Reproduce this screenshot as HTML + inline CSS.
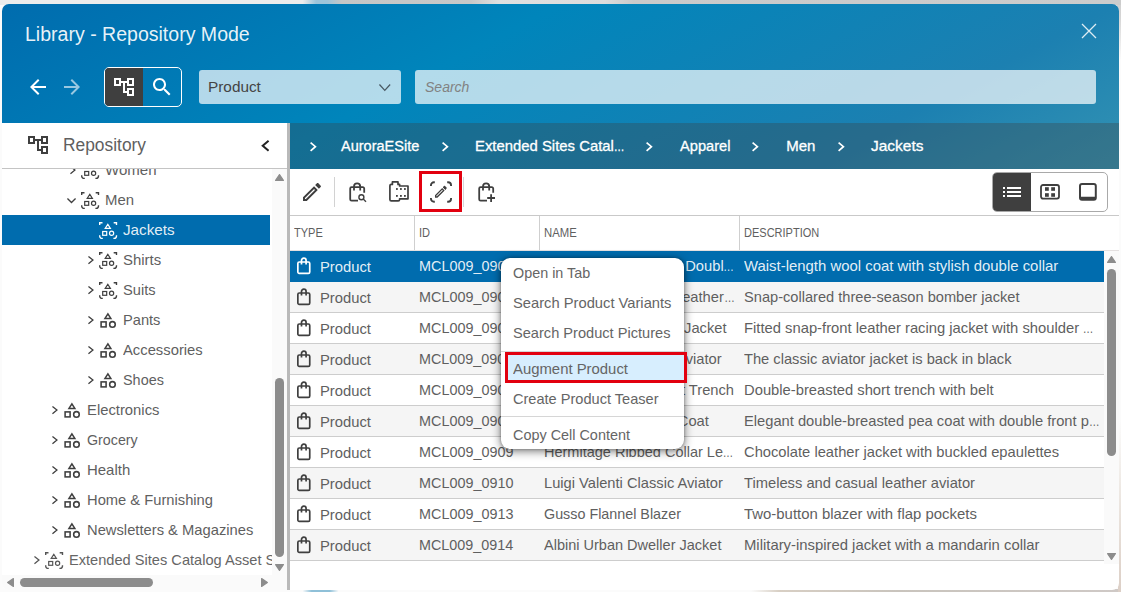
<!DOCTYPE html>
<html lang="en"><head><meta charset="utf-8"><title>Library - Repository Mode</title><style>
html,body{margin:0;padding:0}
body{width:1121px;height:592px;overflow:hidden;position:relative;font-family:'Liberation Sans',sans-serif;
 background:#fbfbfb}
#bt{position:absolute;left:0;top:0;width:1121px;height:5px;background:linear-gradient(90deg,#ececec 0%,#ececec 27%,#9cc4da 28.2%,#9cc4da 29.2%,#c6c6c6 30.5%,#c8c8c8 42%,#e0e0e0 44.5%,#dcdcdc 54%,#cacaca 56.5%,#cccccc 100%)}
#bb{position:absolute;left:0;top:589px;width:1121px;height:3px;background:linear-gradient(90deg,#fbfbfb 0%,#fbfbfb 27%,#8fc0d8 27.8%,#8fc0d8 29.4%,#fbfbfb 30.2%,#fbfbfb 67%,#d8cfc4 69.5%,#c9c4bd 80%,#cfc9c6 100%)}
#br0{position:absolute;left:1117px;top:0;width:4px;height:60px;background:linear-gradient(180deg,#cfcfcf 0%,#d6d6d6 30%,#fbfbfb 100%)}
#br{position:absolute;left:1118px;top:420px;width:3px;height:172px;background:linear-gradient(180deg,#fbfbfb 0%,#eee9e4 40%,#dccfc6 100%)}
#dlg{position:absolute;left:0;top:0;width:1121px;height:592px;clip-path:inset(4px 2px 2px 2px round 7px)}
.b{position:absolute;box-sizing:border-box}
.i{position:absolute;display:block;overflow:visible}
.e{display:inline-block;width:.72em;transform:scaleX(.72);transform-origin:0 50%}
.t{position:absolute;white-space:pre;line-height:30px;height:30px;font-family:'Liberation Sans',sans-serif;transform-origin:0 50%}
</style></head><body>
<div id="br0"></div><div id="bt"></div><div id="bb"></div><div id="br"></div>
<div id="dlg">
<div class="b hdr" style="left:0px;top:0px;width:1121px;height:169px;background:linear-gradient(to bottom right,#006cae 0%,#0085bb 25%,#1c80b1 50%,#6fc3b8 100%) 2px 4px/1117px 586px no-repeat"></div>
<span class="t " style="left:24.59px;top:19px;font-size:20px;color:rgba(255,255,255,.92);transform:scaleX(0.9767);">Library - Repository Mode</span>
<svg class="i" style="left:1080px;top:22px" width="18" height="18" viewBox="0 0 18 18" ><path d="M2 2L16 16M16 2L2 16" stroke="#fff" stroke-opacity="0.85" stroke-width="1.3" fill="none"/></svg>
<svg class="i" style="left:26px;top:75px;opacity:1" width="24" height="24" viewBox="0 0 24 24"><path fill="#fff" d="M20 11H7.83l5.59-5.59L12 4l-8 8 8 8 1.41-1.41L7.83 13H20v-2z"/></svg>
<svg class="i" style="left:60px;top:75px;opacity:0.6" width="24" height="24" viewBox="0 0 24 24"><path fill="#fff" d="M12 4l-1.41 1.41L16.17 11H4v2h12.17l-5.58 5.59L12 20l8-8z"/></svg>
<div class="b " style="left:104px;top:67px;width:78px;height:40px;border:1px solid #fff;border-radius:5px;box-sizing:border-box;overflow:hidden"><div class="b" style="left:0;top:0;width:38px;height:38px;background:#3f3f3f"></div></div>
<svg class="i" style="left:114px;top:78px" width="20" height="18" viewBox="0 0 20 18" ><g fill="none" stroke="#fff" stroke-width="2"><rect x="1" y="1" width="5" height="6"/><rect x="14" y="1" width="5" height="6"/><rect x="14" y="11" width="5" height="6"/><path d="M7 4H13M10 4V14H13"/></g></svg>
<svg class="i" style="left:150px;top:75px;opacity:1" width="24" height="24" viewBox="0 0 24 24"><path fill="#fff" d="M15.5 14h-.79l-.28-.27C15.41 12.59 16 11.11 16 9.5 16 5.91 13.09 3 9.5 3S3 5.91 3 9.5 5.91 16 9.5 16c1.61 0 3.09-.59 4.23-1.57l.27.28v.79l5 4.99L20.49 19l-4.99-5zm-6 0C7.01 14 5 11.99 5 9.5S7.01 5 9.5 5 14 7.01 14 9.5 11.99 14 9.5 14z"/></svg>
<div class="b " style="left:199px;top:70px;width:202px;height:34px;background:rgba(255,255,255,.7);border-radius:3px"></div>
<span class="t " style="left:208.42px;top:72px;font-size:15px;color:#444;transform:scaleX(1.0229);">Product</span>
<svg class="i" style="left:377.2px;top:82.3px" width="15.6" height="10.8" viewBox="0 0 15.6 10.8" ><path d="M2.455 2.4550000000000005L7.8 8.345L13.145 2.4550000000000005" fill="none" stroke="#4a5a64" stroke-width="1.3"/></svg>
<div class="b " style="left:415px;top:70px;width:681px;height:34px;background:rgba(255,255,255,.7);border-radius:3px"></div>
<span class="t " style="left:424.83px;top:72px;font-size:15px;color:#828282;transform:scaleX(0.9341);font-style:italic;">Search</span>
<div class="b " style="left:0px;top:123px;width:287px;height:469px;background:#fff"></div>
<svg class="i" style="left:28px;top:136px" width="20" height="18" viewBox="0 0 20 18" ><g fill="none" stroke="#3f3f3f" stroke-width="2"><rect x="1" y="1" width="5" height="6"/><rect x="14" y="1" width="5" height="6"/><rect x="14" y="11" width="5" height="6"/><path d="M7 4H13M10 4V14H13"/></g></svg>
<span class="t " style="left:63.30px;top:130px;font-size:18px;color:#5f5f5f;transform:scaleX(0.9651);">Repository</span>
<svg class="i" style="left:259.55px;top:138.45px" width="11.3" height="15.5" viewBox="0 0 11.3 15.5" ><path d="M8.600000000000001 2.7L2.7 7.75L8.600000000000001 12.8" fill="none" stroke="#222" stroke-width="2"/></svg>
<div class="b " style="left:0px;top:168px;width:287px;height:1px;background:#c4c4c4"></div>
<div class="b" style="left:0;top:169px;width:272px;height:406px;overflow:hidden"><div class="b" style="left:0;top:-169px;width:600px;height:592px"><svg class="i" style="left:68.3px;top:163.9px" width="9.4" height="12.2" viewBox="0 0 9.4 12.2" ><path d="M2.455 2.455L6.945 6.1L2.455 9.745" fill="none" stroke="#3f3f3f" stroke-width="1.3"/></svg><svg class="i" style="left:80.9px;top:162px" width="18.2" height="17.2" viewBox="0 0 18.2 17.2" ><g fill="none" stroke="#3f3f3f" stroke-width="1.4"><path d="M0.7 3.1V0.7H3.5M14.7 0.7H17.5V3.1"/><path d="M0.7 13.2V14a2.4 2.4 0 0 0 2.4 2.4H3.8M14.4 16.4H15.1a2.4 2.4 0 0 0 2.4-2.4V13.2"/></g><g fill="none" stroke="#3f3f3f" stroke-width="1.2"><path d="M8.8 2.3L11.4 6.4H6.2Z"/><rect x="3.7" y="9.5" width="4" height="3.8"/><circle cx="12.6" cy="11.3" r="2.1"/></g></svg><span class="t " style="left:104.70px;top:155px;font-size:15px;color:#5f5f5f;transform:scaleX(1.0020);">Women</span><svg class="i" style="left:65.0px;top:195.5px" width="13" height="9" viewBox="0 0 13 9" ><path d="M2.455 2.455L6.5 6.545L10.545 2.455" fill="none" stroke="#3f3f3f" stroke-width="1.3"/></svg><svg class="i" style="left:80.9px;top:192px" width="18.2" height="17.2" viewBox="0 0 18.2 17.2" ><g fill="none" stroke="#3f3f3f" stroke-width="1.4"><path d="M0.7 3.1V0.7H3.5M14.7 0.7H17.5V3.1"/><path d="M0.7 13.2V14a2.4 2.4 0 0 0 2.4 2.4H3.8M14.4 16.4H15.1a2.4 2.4 0 0 0 2.4-2.4V13.2"/></g><g fill="none" stroke="#3f3f3f" stroke-width="1.2"><path d="M8.8 2.3L11.4 6.4H6.2Z"/><rect x="3.7" y="9.5" width="4" height="3.8"/><circle cx="12.6" cy="11.3" r="2.1"/></g></svg><span class="t " style="left:104.70px;top:185px;font-size:15px;color:#5f5f5f;transform:scaleX(0.9947);">Men</span><div class="b" style="left:0;top:215px;width:270px;height:30px;background:#006cae"></div><svg class="i" style="left:98.9px;top:222px" width="18.2" height="17.2" viewBox="0 0 18.2 17.2" ><g fill="none" stroke="#fff" stroke-width="1.4"><path d="M0.7 3.1V0.7H3.5M14.7 0.7H17.5V3.1"/><path d="M0.7 13.2V14a2.4 2.4 0 0 0 2.4 2.4H3.8M14.4 16.4H15.1a2.4 2.4 0 0 0 2.4-2.4V13.2"/></g><g fill="none" stroke="#fff" stroke-width="1.2"><path d="M8.8 2.3L11.4 6.4H6.2Z"/><rect x="3.7" y="9.5" width="4" height="3.8"/><circle cx="12.6" cy="11.3" r="2.1"/></g></svg><span class="t " style="left:122.70px;top:215px;font-size:15px;color:rgba(255,255,255,.9);transform:scaleX(1.0149);">Jackets</span><svg class="i" style="left:86.3px;top:253.9px" width="9.4" height="12.2" viewBox="0 0 9.4 12.2" ><path d="M2.455 2.455L6.945 6.1L2.455 9.745" fill="none" stroke="#3f3f3f" stroke-width="1.3"/></svg><svg class="i" style="left:98.9px;top:252px" width="18.2" height="17.2" viewBox="0 0 18.2 17.2" ><g fill="none" stroke="#3f3f3f" stroke-width="1.4"><path d="M0.7 3.1V0.7H3.5M14.7 0.7H17.5V3.1"/><path d="M0.7 13.2V14a2.4 2.4 0 0 0 2.4 2.4H3.8M14.4 16.4H15.1a2.4 2.4 0 0 0 2.4-2.4V13.2"/></g><g fill="none" stroke="#3f3f3f" stroke-width="1.2"><path d="M8.8 2.3L11.4 6.4H6.2Z"/><rect x="3.7" y="9.5" width="4" height="3.8"/><circle cx="12.6" cy="11.3" r="2.1"/></g></svg><span class="t " style="left:122.70px;top:245px;font-size:15px;color:#5f5f5f;transform:scaleX(0.9960);">Shirts</span><svg class="i" style="left:86.3px;top:283.9px" width="9.4" height="12.2" viewBox="0 0 9.4 12.2" ><path d="M2.455 2.455L6.945 6.1L2.455 9.745" fill="none" stroke="#3f3f3f" stroke-width="1.3"/></svg><svg class="i" style="left:98.9px;top:282px" width="18.2" height="17.2" viewBox="0 0 18.2 17.2" ><g fill="none" stroke="#3f3f3f" stroke-width="1.4"><path d="M0.7 3.1V0.7H3.5M14.7 0.7H17.5V3.1"/><path d="M0.7 13.2V14a2.4 2.4 0 0 0 2.4 2.4H3.8M14.4 16.4H15.1a2.4 2.4 0 0 0 2.4-2.4V13.2"/></g><g fill="none" stroke="#3f3f3f" stroke-width="1.2"><path d="M8.8 2.3L11.4 6.4H6.2Z"/><rect x="3.7" y="9.5" width="4" height="3.8"/><circle cx="12.6" cy="11.3" r="2.1"/></g></svg><span class="t " style="left:122.70px;top:275px;font-size:15px;color:#5f5f5f;transform:scaleX(0.9771);">Suits</span><svg class="i" style="left:86.3px;top:313.9px" width="9.4" height="12.2" viewBox="0 0 9.4 12.2" ><path d="M2.455 2.455L6.945 6.1L2.455 9.745" fill="none" stroke="#3f3f3f" stroke-width="1.3"/></svg><svg class="i" style="left:100.4px;top:312.4px" width="16" height="16" viewBox="0 0 16 16" ><g fill="none" stroke="#3f3f3f" stroke-width="1.55" stroke-linejoin="miter"><path d="M7.9 1.9L10.8 6.4H5Z"/><rect x="1.1" y="9.9" width="5" height="5"/><circle cx="12.45" cy="12.4" r="2.8"/></g></svg><span class="t " style="left:122.70px;top:305px;font-size:15px;color:#5f5f5f;transform:scaleX(0.9762);">Pants</span><svg class="i" style="left:86.3px;top:343.9px" width="9.4" height="12.2" viewBox="0 0 9.4 12.2" ><path d="M2.455 2.455L6.945 6.1L2.455 9.745" fill="none" stroke="#3f3f3f" stroke-width="1.3"/></svg><svg class="i" style="left:100.4px;top:342.4px" width="16" height="16" viewBox="0 0 16 16" ><g fill="none" stroke="#3f3f3f" stroke-width="1.55" stroke-linejoin="miter"><path d="M7.9 1.9L10.8 6.4H5Z"/><rect x="1.1" y="9.9" width="5" height="5"/><circle cx="12.45" cy="12.4" r="2.8"/></g></svg><span class="t " style="left:122.70px;top:335px;font-size:15px;color:#5f5f5f;transform:scaleX(0.9857);">Accessories</span><svg class="i" style="left:86.3px;top:373.9px" width="9.4" height="12.2" viewBox="0 0 9.4 12.2" ><path d="M2.455 2.455L6.945 6.1L2.455 9.745" fill="none" stroke="#3f3f3f" stroke-width="1.3"/></svg><svg class="i" style="left:100.4px;top:372.4px" width="16" height="16" viewBox="0 0 16 16" ><g fill="none" stroke="#3f3f3f" stroke-width="1.55" stroke-linejoin="miter"><path d="M7.9 1.9L10.8 6.4H5Z"/><rect x="1.1" y="9.9" width="5" height="5"/><circle cx="12.45" cy="12.4" r="2.8"/></g></svg><span class="t " style="left:122.70px;top:365px;font-size:15px;color:#5f5f5f;transform:scaleX(0.9607);">Shoes</span><svg class="i" style="left:50.3px;top:403.9px" width="9.4" height="12.2" viewBox="0 0 9.4 12.2" ><path d="M2.455 2.455L6.945 6.1L2.455 9.745" fill="none" stroke="#3f3f3f" stroke-width="1.3"/></svg><svg class="i" style="left:64.4px;top:402.4px" width="16" height="16" viewBox="0 0 16 16" ><g fill="none" stroke="#3f3f3f" stroke-width="1.55" stroke-linejoin="miter"><path d="M7.9 1.9L10.8 6.4H5Z"/><rect x="1.1" y="9.9" width="5" height="5"/><circle cx="12.45" cy="12.4" r="2.8"/></g></svg><span class="t " style="left:86.70px;top:395px;font-size:15px;color:#5f5f5f;transform:scaleX(0.9876);">Electronics</span><svg class="i" style="left:50.3px;top:433.9px" width="9.4" height="12.2" viewBox="0 0 9.4 12.2" ><path d="M2.455 2.455L6.945 6.1L2.455 9.745" fill="none" stroke="#3f3f3f" stroke-width="1.3"/></svg><svg class="i" style="left:64.4px;top:432.4px" width="16" height="16" viewBox="0 0 16 16" ><g fill="none" stroke="#3f3f3f" stroke-width="1.55" stroke-linejoin="miter"><path d="M7.9 1.9L10.8 6.4H5Z"/><rect x="1.1" y="9.9" width="5" height="5"/><circle cx="12.45" cy="12.4" r="2.8"/></g></svg><span class="t " style="left:86.70px;top:425px;font-size:15px;color:#5f5f5f;transform:scaleX(0.9502);">Grocery</span><svg class="i" style="left:50.3px;top:463.9px" width="9.4" height="12.2" viewBox="0 0 9.4 12.2" ><path d="M2.455 2.455L6.945 6.1L2.455 9.745" fill="none" stroke="#3f3f3f" stroke-width="1.3"/></svg><svg class="i" style="left:64.4px;top:462.4px" width="16" height="16" viewBox="0 0 16 16" ><g fill="none" stroke="#3f3f3f" stroke-width="1.55" stroke-linejoin="miter"><path d="M7.9 1.9L10.8 6.4H5Z"/><rect x="1.1" y="9.9" width="5" height="5"/><circle cx="12.45" cy="12.4" r="2.8"/></g></svg><span class="t " style="left:86.70px;top:455px;font-size:15px;color:#5f5f5f;transform:scaleX(0.9964);">Health</span><svg class="i" style="left:50.3px;top:493.9px" width="9.4" height="12.2" viewBox="0 0 9.4 12.2" ><path d="M2.455 2.455L6.945 6.1L2.455 9.745" fill="none" stroke="#3f3f3f" stroke-width="1.3"/></svg><svg class="i" style="left:64.4px;top:492.4px" width="16" height="16" viewBox="0 0 16 16" ><g fill="none" stroke="#3f3f3f" stroke-width="1.55" stroke-linejoin="miter"><path d="M7.9 1.9L10.8 6.4H5Z"/><rect x="1.1" y="9.9" width="5" height="5"/><circle cx="12.45" cy="12.4" r="2.8"/></g></svg><span class="t " style="left:86.70px;top:485px;font-size:15px;color:#5f5f5f;transform:scaleX(0.9812);">Home &amp; Furnishing</span><svg class="i" style="left:50.3px;top:523.9px" width="9.4" height="12.2" viewBox="0 0 9.4 12.2" ><path d="M2.455 2.455L6.945 6.1L2.455 9.745" fill="none" stroke="#3f3f3f" stroke-width="1.3"/></svg><svg class="i" style="left:64.4px;top:522.4px" width="16" height="16" viewBox="0 0 16 16" ><g fill="none" stroke="#3f3f3f" stroke-width="1.55" stroke-linejoin="miter"><path d="M7.9 1.9L10.8 6.4H5Z"/><rect x="1.1" y="9.9" width="5" height="5"/><circle cx="12.45" cy="12.4" r="2.8"/></g></svg><span class="t " style="left:86.70px;top:515px;font-size:15px;color:#5f5f5f;transform:scaleX(0.9828);">Newsletters &amp; Magazines</span><svg class="i" style="left:32.3px;top:553.9px" width="9.4" height="12.2" viewBox="0 0 9.4 12.2" ><path d="M2.455 2.455L6.945 6.1L2.455 9.745" fill="none" stroke="#555" stroke-width="1.3"/></svg><svg class="i" style="left:44.9px;top:552px" width="18.2" height="17.2" viewBox="0 0 18.2 17.2" ><g fill="none" stroke="#555" stroke-width="1.4"><path d="M0.7 3.1V0.7H3.5M14.7 0.7H17.5V3.1"/><path d="M0.7 13.2V14a2.4 2.4 0 0 0 2.4 2.4H3.8M14.4 16.4H15.1a2.4 2.4 0 0 0 2.4-2.4V13.2"/></g><g fill="none" stroke="#555" stroke-width="1.2"><path d="M8.8 2.3L11.4 6.4H6.2Z"/><rect x="3.7" y="9.5" width="4" height="3.8"/><circle cx="12.6" cy="11.3" r="2.1"/></g></svg><span class="t " style="left:68.70px;top:545px;font-size:15px;color:#666;transform:scaleX(0.9740);">Extended Sites Catalog Asset Store</span></div></div>
<div class="b " style="left:272px;top:169px;width:15px;height:406px;background:#fafafa"></div>
<svg class="i" style="left:275px;top:174px" width="9" height="7" viewBox="0 0 9 7" ><path d="M0.6 6.4L4.5 0.6L8.4 6.4Z" fill="#8c8c8c" stroke="#8c8c8c" stroke-width="1.2" stroke-linejoin="round"/></svg>
<div class="b " style="left:275px;top:378px;width:9px;height:179px;background:#8c8c8c;border-radius:4.5px"></div>
<svg class="i" style="left:275px;top:564px" width="9" height="7" viewBox="0 0 9 7" ><path d="M0.6 0.6L4.5 6.4L8.4 0.6Z" fill="#8c8c8c" stroke="#8c8c8c" stroke-width="1.2" stroke-linejoin="round"/></svg>
<div class="b " style="left:2px;top:575px;width:285px;height:15px;background:#fafafa"></div>
<svg class="i" style="left:6.5px;top:578px" width="7" height="9" viewBox="0 0 7 9" ><path d="M6.4 0.6L0.6 4.5L6.4 8.4Z" fill="#8c8c8c" stroke="#8c8c8c" stroke-width="1.2" stroke-linejoin="round"/></svg>
<div class="b " style="left:20px;top:578px;width:133px;height:9px;background:#8c8c8c;border-radius:4.5px"></div>
<svg class="i" style="left:260.5px;top:578px" width="7" height="9" viewBox="0 0 7 9" ><path d="M0.6 0.6L6.4 4.5L0.6 8.4Z" fill="#8c8c8c" stroke="#8c8c8c" stroke-width="1.2" stroke-linejoin="round"/></svg>
<div class="b " style="left:287px;top:123px;width:3px;height:469px;background:#b9b9b9"></div>
<div class="b " style="left:290px;top:169px;width:831px;height:423px;background:#fff"></div>
<div class="b " style="left:290px;top:123px;width:831px;height:46px;background:rgba(63,63,63,.32)"></div>
<svg class="i" style="left:308.2px;top:139.5px" width="10" height="13.4" viewBox="0 0 10 13.4" ><path d="M2.5949999999999998 2.5949999999999998L7.405 6.7L2.5949999999999998 10.805" fill="none" stroke="#fff" stroke-width="1.7"/></svg>
<span class="t " style="left:341.40px;top:131px;font-size:15px;color:#fff;transform:scaleX(0.9682);-webkit-text-stroke:0.3px #fff;">AuroraESite</span>
<svg class="i" style="left:440.2px;top:139.5px" width="10" height="13.4" viewBox="0 0 10 13.4" ><path d="M2.5949999999999998 2.5949999999999998L7.405 6.7L2.5949999999999998 10.805" fill="none" stroke="#fff" stroke-width="1.7"/></svg>
<span class="t " style="left:475.16px;top:131px;font-size:15px;color:#fff;transform:scaleX(0.9912);-webkit-text-stroke:0.3px #fff;">Extended Sites Catal<span class="e">…</span></span>
<svg class="i" style="left:644.2px;top:139.5px" width="10" height="13.4" viewBox="0 0 10 13.4" ><path d="M2.5949999999999998 2.5949999999999998L7.405 6.7L2.5949999999999998 10.805" fill="none" stroke="#fff" stroke-width="1.7"/></svg>
<span class="t " style="left:679.50px;top:131px;font-size:15px;color:#fff;transform:scaleX(0.9754);-webkit-text-stroke:0.3px #fff;">Apparel</span>
<svg class="i" style="left:750.4px;top:139.5px" width="10" height="13.4" viewBox="0 0 10 13.4" ><path d="M2.5949999999999998 2.5949999999999998L7.405 6.7L2.5949999999999998 10.805" fill="none" stroke="#fff" stroke-width="1.7"/></svg>
<span class="t " style="left:786.25px;top:131px;font-size:15px;color:#fff;transform:scaleX(1.0000);-webkit-text-stroke:0.3px #fff;">Men</span>
<svg class="i" style="left:835.5px;top:139.5px" width="10" height="13.4" viewBox="0 0 10 13.4" ><path d="M2.5949999999999998 2.5949999999999998L7.405 6.7L2.5949999999999998 10.805" fill="none" stroke="#fff" stroke-width="1.7"/></svg>
<span class="t " style="left:870.94px;top:131px;font-size:15px;color:#fff;transform:scaleX(1.0320);-webkit-text-stroke:0.3px #fff;">Jackets</span>
<svg class="i" style="left:300px;top:180px;opacity:1" width="24" height="24" viewBox="0 0 24 24"><path fill="#3f3f3f" d="M14.06 9.02l.92.92L5.92 19H5v-.92l9.06-9.06M17.66 3c-.25 0-.51.1-.7.29l-1.83 1.83 3.75 3.75 1.83-1.83c.39-.39.39-1.02 0-1.41l-2.34-2.34c-.2-.2-.45-.29-.71-.29zm-3.6 3.19L3 17.25V21h3.75L17.81 9.94l-3.75-3.75z"/></svg>
<div class="b " style="left:334px;top:177px;width:1px;height:30px;background:#d2d2d2"></div>
<svg class="i" style="left:349px;top:182px" width="18" height="21" viewBox="0 0 18 21" ><g fill="none" stroke="#3f3f3f" stroke-width="1.8" stroke-linecap="butt"><path d="M15.2 10.7V6.6a1.4 1.4 0 0 0 -1.4 -1.4H2.6a1.4 1.4 0 0 0 -1.4 1.4V17.3a1.4 1.4 0 0 0 1.4 1.4H9"/><path d="M5 8.6V4.4a3.1 3.1 0 0 1 6.2 0V8.6"/></g><g fill="none" stroke="#3f3f3f" stroke-width="1.4"><circle cx="12.4" cy="15.3" r="2.5"/><path d="M14.2 17.1L17 19.7"/></g></svg>
<svg class="i" style="left:389px;top:181.4px" width="20" height="21" viewBox="0 0 20 21" ><g fill="none" stroke="#3f3f3f" stroke-width="1.7" stroke-linejoin="round"><path d="M10.6 5V3.4H9V0.9H3.4V3.4H2.3a1.4 1.4 0 0 0 -1.4 1.4V18.4a1.4 1.4 0 0 0 1.4 1.4H9.2a1.4 1.4 0 0 0 1.4 -1.4V17.8H19V5Z"/></g><g fill="#3f3f3f"><rect x="7" y="7.1" width="1.8" height="1.8"/><rect x="11" y="7.1" width="1.8" height="1.8"/><rect x="15" y="7.1" width="1.8" height="1.8"/><rect x="7" y="14" width="1.8" height="1.8"/><rect x="11" y="14" width="1.8" height="1.8"/><rect x="15" y="14" width="1.8" height="1.8"/></g></svg>
<div class="b " style="left:419px;top:171px;width:43px;height:41px;border:3px solid #e2000f;box-sizing:border-box"></div>
<svg class="i" style="left:430px;top:181px" width="22" height="22" viewBox="0 0 22 22" ><g fill="none" stroke="#3f3f3f" stroke-width="1.9"><path d="M0.95 5V4.2a3 3 0 0 1 3 -3H4.8M17.2 1.2H18.05a3 3 0 0 1 3 3V5M21.05 17.1V17.8a3 3 0 0 1 -3 3H17.2M4.8 20.8H3.95a3 3 0 0 1 -3 -3V17.1"/></g><g transform="translate(3,2.9) scale(0.655)"><path fill="#3f3f3f" d="M14.06 9.02l.92.92L5.92 19H5v-.92l9.06-9.06M17.66 3c-.25 0-.51.1-.7.29l-1.83 1.83 3.75 3.75 1.83-1.83c.39-.39.39-1.02 0-1.41l-2.34-2.34c-.2-.2-.45-.29-.71-.29zm-3.6 3.19L3 17.25V21h3.75L17.81 9.94l-3.75-3.75z"/><path fill="#3f3f3f" d="M15.13 5.12l1.2-1.2 3.75 3.75-1.2 1.2z"/></g></svg>
<div class="b " style="left:463px;top:177px;width:1px;height:30px;background:#d2d6da"></div>
<svg class="i" style="left:478px;top:182px" width="18" height="21" viewBox="0 0 18 21" ><g fill="none" stroke="#3f3f3f" stroke-width="1.8" stroke-linecap="butt"><path d="M15.2 10.7V6.6a1.4 1.4 0 0 0 -1.4 -1.4H2.6a1.4 1.4 0 0 0 -1.4 1.4V17.3a1.4 1.4 0 0 0 1.4 1.4H9"/><path d="M5 8.6V4.4a3.1 3.1 0 0 1 6.2 0V8.6"/><path d="M9.2 16H17M13.1 12.2V19.9"/></g></svg>
<div class="b " style="left:992px;top:172px;width:116px;height:40px;border:1px solid #a9a9a9;border-radius:5px;box-sizing:border-box;overflow:hidden;background:#fff"><div class="b" style="left:0;top:0;width:38px;height:38px;background:#3f3f3f"></div></div>
<svg class="i" style="left:1000px;top:180px;opacity:1" width="24" height="24" viewBox="0 0 24 24"><path fill="#fff" d="M3 13h2v-2H3v2zm0 4h2v-2H3v2zm0-8h2V7H3v2zm4 4h14v-2H7v2zm0 4h14v-2H7v2zM7 7v2h14V7H7z"/></svg>
<svg class="i" style="left:1040px;top:184px" width="20" height="16" viewBox="0 0 20 16" ><rect x="1" y="1" width="18" height="13.6" rx="2" fill="none" stroke="#3f3f3f" stroke-width="1.8"/><g fill="#3f3f3f"><rect x="5" y="3.2" width="3.8" height="3.6"/><rect x="11.2" y="3.2" width="3.8" height="3.6"/><rect x="5" y="9.2" width="3.8" height="3.6"/><rect x="11.2" y="9.2" width="3.8" height="3.6"/></g></svg>
<svg class="i" style="left:1079px;top:183px" width="18" height="18" viewBox="0 0 18 18" ><rect x="1" y="1" width="15.8" height="15.8" rx="2" fill="none" stroke="#3f3f3f" stroke-width="2"/><path d="M1 13.8H16.8V15.8a1 1 0 0 1 -1 1H2a1 1 0 0 1 -1 -1Z" fill="#3f3f3f"/></svg>
<div class="b " style="left:290px;top:215px;width:829px;height:1px;background:#c9c9c9"></div>
<span class="t " style="left:294.00px;top:218px;font-size:12px;color:#5f5f5f;transform:scaleX(0.9203);">TYPE</span>
<div class="b " style="left:414px;top:216px;width:1px;height:35px;background:#cfcfcf"></div>
<span class="t " style="left:419.20px;top:218px;font-size:12px;color:#5f5f5f;transform:scaleX(0.9217);">ID</span>
<div class="b " style="left:539px;top:216px;width:1px;height:35px;background:#cfcfcf"></div>
<span class="t " style="left:544.20px;top:218px;font-size:12px;color:#5f5f5f;transform:scaleX(0.9445);">NAME</span>
<div class="b " style="left:739px;top:216px;width:1px;height:35px;background:#cfcfcf"></div>
<span class="t " style="left:744.20px;top:218px;font-size:12px;color:#5f5f5f;transform:scaleX(0.9179);">DESCRIPTION</span>
<div class="b " style="left:290px;top:250px;width:829px;height:1px;background:#e4e0e0"></div>
<div class="b " style="left:290px;top:251px;width:814px;height:31px;background:#006cae"></div>
<svg class="i" style="left:297.3px;top:257.9px" width="13.6" height="16.4" viewBox="0 0 13.6 16.4" ><g fill="none" stroke="#fff" stroke-width="1.7"><rect x="0.85" y="4" width="11.9" height="11.4" rx="1.4"/><path d="M4.5 6.6V2.5a2.3 2.3 0 0 1 4.6 0V6.6"/></g></svg>
<span class="t " style="left:320.30px;top:252px;font-size:15px;color:rgba(255,255,255,.9);transform:scaleX(0.9854);">Product</span>
<span class="t " style="left:419.20px;top:251px;font-size:15px;color:rgba(255,255,255,.9);transform:scaleX(0.9601);">MCL009_0901</span>
<span class="t " style="left:536.05px;top:251px;font-size:15px;color:rgba(255,255,255,.9);transform:scaleX(0.9800);">Gusso Wool Coat with Doubl<span class="e">…</span></span>
<span class="t " style="left:744.00px;top:251px;font-size:15px;color:rgba(255,255,255,.9);transform:scaleX(0.9937);">Waist-length wool coat with stylish double collar</span>
<div class="b " style="left:290px;top:282px;width:814px;height:31px;background:#f5f5f5;border-bottom:1px solid #cdcdcd;box-sizing:border-box"></div>
<svg class="i" style="left:297.3px;top:288.9px" width="13.6" height="16.4" viewBox="0 0 13.6 16.4" ><g fill="none" stroke="#3f3f3f" stroke-width="1.7"><rect x="0.85" y="4" width="11.9" height="11.4" rx="1.4"/><path d="M4.5 6.6V2.5a2.3 2.3 0 0 1 4.6 0V6.6"/></g></svg>
<span class="t " style="left:320.30px;top:283px;font-size:15px;color:#5f5f5f;transform:scaleX(0.9854);">Product</span>
<span class="t " style="left:419.20px;top:282px;font-size:15px;color:#5f5f5f;transform:scaleX(0.9601);">MCL009_0902</span>
<span class="t " style="left:536.55px;top:282px;font-size:15px;color:#5f5f5f;transform:scaleX(0.9800);">Albini Three-Season Leather<span class="e">…</span></span>
<span class="t " style="left:744.00px;top:282px;font-size:15px;color:#5f5f5f;transform:scaleX(0.9745);">Snap-collared three-season bomber jacket</span>
<div class="b " style="left:290px;top:313px;width:814px;height:31px;background:#fff;border-bottom:1px solid #cdcdcd;box-sizing:border-box"></div>
<svg class="i" style="left:297.3px;top:319.9px" width="13.6" height="16.4" viewBox="0 0 13.6 16.4" ><g fill="none" stroke="#3f3f3f" stroke-width="1.7"><rect x="0.85" y="4" width="11.9" height="11.4" rx="1.4"/><path d="M4.5 6.6V2.5a2.3 2.3 0 0 1 4.6 0V6.6"/></g></svg>
<span class="t " style="left:320.30px;top:314px;font-size:15px;color:#5f5f5f;transform:scaleX(0.9854);">Product</span>
<span class="t " style="left:419.20px;top:313px;font-size:15px;color:#5f5f5f;transform:scaleX(0.9601);">MCL009_0903</span>
<span class="t " style="left:527.85px;top:313px;font-size:15px;color:#5f5f5f;transform:scaleX(0.9800);">Versatil Leather Racing Jacket</span>
<span class="t " style="left:744.00px;top:313px;font-size:15px;color:#5f5f5f;transform:scaleX(0.9851);">Fitted snap-front leather racing jacket with shoulder <span class="e">…</span></span>
<div class="b " style="left:290px;top:344px;width:814px;height:31px;background:#f5f5f5;border-bottom:1px solid #cdcdcd;box-sizing:border-box"></div>
<svg class="i" style="left:297.3px;top:350.9px" width="13.6" height="16.4" viewBox="0 0 13.6 16.4" ><g fill="none" stroke="#3f3f3f" stroke-width="1.7"><rect x="0.85" y="4" width="11.9" height="11.4" rx="1.4"/><path d="M4.5 6.6V2.5a2.3 2.3 0 0 1 4.6 0V6.6"/></g></svg>
<span class="t " style="left:320.30px;top:345px;font-size:15px;color:#5f5f5f;transform:scaleX(0.9854);">Product</span>
<span class="t " style="left:419.20px;top:344px;font-size:15px;color:#5f5f5f;transform:scaleX(0.9577);">MCL009_0904</span>
<span class="t " style="left:564.59px;top:344px;font-size:15px;color:#5f5f5f;transform:scaleX(0.9800);">Hermitage Black Aviator</span>
<span class="t " style="left:744.00px;top:344px;font-size:15px;color:#5f5f5f;transform:scaleX(0.9782);">The classic aviator jacket is back in black</span>
<div class="b " style="left:290px;top:375px;width:814px;height:31px;background:#fff;border-bottom:1px solid #cdcdcd;box-sizing:border-box"></div>
<svg class="i" style="left:297.3px;top:381.9px" width="13.6" height="16.4" viewBox="0 0 13.6 16.4" ><g fill="none" stroke="#3f3f3f" stroke-width="1.7"><rect x="0.85" y="4" width="11.9" height="11.4" rx="1.4"/><path d="M4.5 6.6V2.5a2.3 2.3 0 0 1 4.6 0V6.6"/></g></svg>
<span class="t " style="left:320.30px;top:376px;font-size:15px;color:#5f5f5f;transform:scaleX(0.9854);">Product</span>
<span class="t " style="left:419.20px;top:375px;font-size:15px;color:#5f5f5f;transform:scaleX(0.9601);">MCL009_0905</span>
<span class="t " style="left:550.76px;top:375px;font-size:15px;color:#5f5f5f;transform:scaleX(0.9800);">Albini Double-Breast Trench</span>
<span class="t " style="left:744.00px;top:375px;font-size:15px;color:#5f5f5f;transform:scaleX(0.9844);">Double-breasted short trench with belt</span>
<div class="b " style="left:290px;top:406px;width:814px;height:31px;background:#f5f5f5;border-bottom:1px solid #cdcdcd;box-sizing:border-box"></div>
<svg class="i" style="left:297.3px;top:412.9px" width="13.6" height="16.4" viewBox="0 0 13.6 16.4" ><g fill="none" stroke="#3f3f3f" stroke-width="1.7"><rect x="0.85" y="4" width="11.9" height="11.4" rx="1.4"/><path d="M4.5 6.6V2.5a2.3 2.3 0 0 1 4.6 0V6.6"/></g></svg>
<span class="t " style="left:320.30px;top:407px;font-size:15px;color:#5f5f5f;transform:scaleX(0.9854);">Product</span>
<span class="t " style="left:419.20px;top:406px;font-size:15px;color:#5f5f5f;transform:scaleX(0.9601);">MCL009_0908</span>
<span class="t " style="left:512.54px;top:406px;font-size:15px;color:#5f5f5f;transform:scaleX(0.9800);">Luigi Valenti Classic Pea Coat</span>
<span class="t " style="left:744.00px;top:406px;font-size:15px;color:#5f5f5f;transform:scaleX(0.9799);">Elegant double-breasted pea coat with double front p<span class="e">…</span></span>
<div class="b " style="left:290px;top:437px;width:814px;height:31px;background:#fff;border-bottom:1px solid #cdcdcd;box-sizing:border-box"></div>
<svg class="i" style="left:297.3px;top:443.9px" width="13.6" height="16.4" viewBox="0 0 13.6 16.4" ><g fill="none" stroke="#3f3f3f" stroke-width="1.7"><rect x="0.85" y="4" width="11.9" height="11.4" rx="1.4"/><path d="M4.5 6.6V2.5a2.3 2.3 0 0 1 4.6 0V6.6"/></g></svg>
<span class="t " style="left:320.30px;top:438px;font-size:15px;color:#5f5f5f;transform:scaleX(0.9854);">Product</span>
<span class="t " style="left:419.20px;top:437px;font-size:15px;color:#5f5f5f;transform:scaleX(0.9601);">MCL009_0909</span>
<span class="t " style="left:544.00px;top:437px;font-size:15px;color:#5f5f5f;transform:scaleX(0.9668);">Hermitage Ribbed Collar Le<span class="e">…</span></span>
<span class="t " style="left:744.00px;top:437px;font-size:15px;color:#5f5f5f;transform:scaleX(0.9816);">Chocolate leather jacket with buckled epaulettes</span>
<div class="b " style="left:290px;top:468px;width:814px;height:31px;background:#f5f5f5;border-bottom:1px solid #cdcdcd;box-sizing:border-box"></div>
<svg class="i" style="left:297.3px;top:474.9px" width="13.6" height="16.4" viewBox="0 0 13.6 16.4" ><g fill="none" stroke="#3f3f3f" stroke-width="1.7"><rect x="0.85" y="4" width="11.9" height="11.4" rx="1.4"/><path d="M4.5 6.6V2.5a2.3 2.3 0 0 1 4.6 0V6.6"/></g></svg>
<span class="t " style="left:320.30px;top:469px;font-size:15px;color:#5f5f5f;transform:scaleX(0.9854);">Product</span>
<span class="t " style="left:419.20px;top:468px;font-size:15px;color:#5f5f5f;transform:scaleX(0.9601);">MCL009_0910</span>
<span class="t " style="left:544.00px;top:468px;font-size:15px;color:#5f5f5f;transform:scaleX(0.9784);">Luigi Valenti Classic Aviator</span>
<span class="t " style="left:744.00px;top:468px;font-size:15px;color:#5f5f5f;transform:scaleX(0.9813);">Timeless and casual leather aviator</span>
<div class="b " style="left:290px;top:499px;width:814px;height:31px;background:#fff;border-bottom:1px solid #cdcdcd;box-sizing:border-box"></div>
<svg class="i" style="left:297.3px;top:505.9px" width="13.6" height="16.4" viewBox="0 0 13.6 16.4" ><g fill="none" stroke="#3f3f3f" stroke-width="1.7"><rect x="0.85" y="4" width="11.9" height="11.4" rx="1.4"/><path d="M4.5 6.6V2.5a2.3 2.3 0 0 1 4.6 0V6.6"/></g></svg>
<span class="t " style="left:320.30px;top:500px;font-size:15px;color:#5f5f5f;transform:scaleX(0.9854);">Product</span>
<span class="t " style="left:419.20px;top:499px;font-size:15px;color:#5f5f5f;transform:scaleX(0.9601);">MCL009_0913</span>
<span class="t " style="left:544.00px;top:499px;font-size:15px;color:#5f5f5f;transform:scaleX(0.9549);">Gusso Flannel Blazer</span>
<span class="t " style="left:744.00px;top:499px;font-size:15px;color:#5f5f5f;transform:scaleX(0.9938);">Two-button blazer with flap pockets</span>
<div class="b " style="left:290px;top:530px;width:814px;height:31px;background:#f5f5f5;border-bottom:1px solid #cdcdcd;box-sizing:border-box"></div>
<svg class="i" style="left:297.3px;top:536.9px" width="13.6" height="16.4" viewBox="0 0 13.6 16.4" ><g fill="none" stroke="#3f3f3f" stroke-width="1.7"><rect x="0.85" y="4" width="11.9" height="11.4" rx="1.4"/><path d="M4.5 6.6V2.5a2.3 2.3 0 0 1 4.6 0V6.6"/></g></svg>
<span class="t " style="left:320.30px;top:531px;font-size:15px;color:#5f5f5f;transform:scaleX(0.9854);">Product</span>
<span class="t " style="left:419.20px;top:530px;font-size:15px;color:#5f5f5f;transform:scaleX(0.9577);">MCL009_0914</span>
<span class="t " style="left:544.00px;top:530px;font-size:15px;color:#5f5f5f;transform:scaleX(0.9675);">Albini Urban Dweller Jacket</span>
<span class="t " style="left:744.00px;top:530px;font-size:15px;color:#5f5f5f;transform:scaleX(0.9901);">Military-inspired jacket with a mandarin collar</span>
<div class="b " style="left:1104px;top:251px;width:15px;height:313px;background:#fafafa"></div>
<svg class="i" style="left:1107px;top:256px" width="9" height="7" viewBox="0 0 9 7" ><path d="M0.6 6.4L4.5 0.6L8.4 6.4Z" fill="#8c8c8c" stroke="#8c8c8c" stroke-width="1.2" stroke-linejoin="round"/></svg>
<div class="b " style="left:1107px;top:269px;width:9px;height:187px;background:#8c8c8c;border-radius:4.5px"></div>
<svg class="i" style="left:1107px;top:553px" width="9" height="7" viewBox="0 0 9 7" ><path d="M0.6 0.6L4.5 6.4L8.4 0.6Z" fill="#8c8c8c" stroke="#8c8c8c" stroke-width="1.2" stroke-linejoin="round"/></svg>
<div class="b " style="left:501px;top:258px;width:183px;height:191px;background:#fff;border-radius:9px;box-shadow:0 2px 10px rgba(0,0,0,.55), 0 0 3px rgba(0,0,0,.3)"></div>
<div class="b " style="left:501px;top:351px;width:183px;height:1px;background:#d6d6d6"></div>
<div class="b " style="left:501px;top:416px;width:183px;height:1px;background:#d6d6d6"></div>
<div class="b " style="left:505px;top:352px;width:182px;height:31px;background:#d7eefe;border:3px solid #e2000f;box-sizing:border-box"></div>
<span class="t " style="left:512.70px;top:258px;font-size:15px;color:#656565;transform:scaleX(0.9575);">Open in Tab</span>
<span class="t " style="left:512.70px;top:288px;font-size:15px;color:#656565;transform:scaleX(0.9814);">Search Product Variants</span>
<span class="t " style="left:512.70px;top:318px;font-size:15px;color:#656565;transform:scaleX(0.9736);">Search Product Pictures</span>
<span class="t " style="left:512.70px;top:354px;font-size:15px;color:#656565;transform:scaleX(0.9918);">Augment Product</span>
<span class="t " style="left:512.70px;top:384px;font-size:15px;color:#656565;transform:scaleX(0.9712);">Create Product Teaser</span>
<span class="t " style="left:512.70px;top:420px;font-size:15px;color:#656565;transform:scaleX(0.9605);">Copy Cell Content</span>
</div>
</body></html>
